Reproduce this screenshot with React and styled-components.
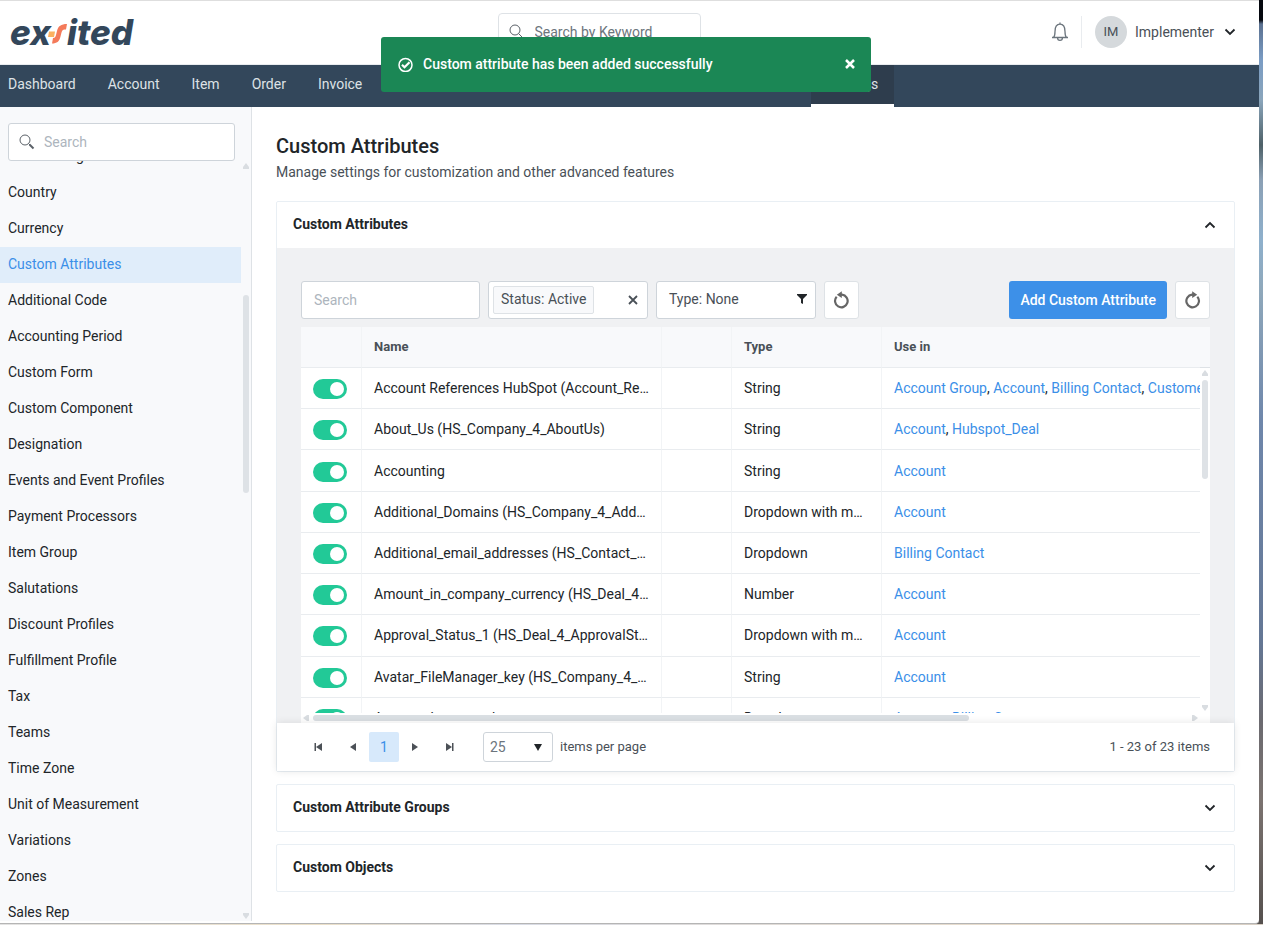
import React, { useState } from 'react';
import styled, { createGlobalStyle } from 'styled-components';

const navItems = ['Dashboard', 'Account', 'Item', 'Order', 'Invoice', 'Payment', 'Purchase Order', 'Adjustments', 'Integrations', 'Settings'];

const sideItems = [
  'User Settings',
  'Country',
  'Currency',
  'Custom Attributes',
  'Additional Code',
  'Accounting Period',
  'Custom Form',
  'Custom Component',
  'Designation',
  'Events and Event Profiles',
  'Payment Processors',
  'Item Group',
  'Salutations',
  'Discount Profiles',
  'Fulfillment Profile',
  'Tax',
  'Teams',
  'Time Zone',
  'Unit of Measurement',
  'Variations',
  'Zones',
  'Sales Rep',
];

const attributes = [
  { id: 1, name: 'Account References HubSpot (Account_References)', type: 'String', uses: ['Account Group', 'Account', 'Billing Contact', 'Customer'] },
  { id: 2, name: 'About_Us (HS_Company_4_AboutUs)', type: 'String', uses: ['Account', 'Hubspot_Deal'] },
  { id: 3, name: 'Accounting', type: 'String', uses: ['Account'] },
  { id: 4, name: 'Additional_Domains (HS_Company_4_AdditionalDomains)', type: 'Dropdown with multiple', uses: ['Account'] },
  { id: 5, name: 'Additional_email_addresses (HS_Contact_4_Emails)', type: 'Dropdown', uses: ['Billing Contact'] },
  { id: 6, name: 'Amount_in_company_currency (HS_Deal_4_Amount)', type: 'Number', uses: ['Account'] },
  { id: 7, name: 'Approval_Status_1 (HS_Deal_4_ApprovalStatus)', type: 'Dropdown with multiple', uses: ['Account'] },
  { id: 8, name: 'Avatar_FileManager_key (HS_Company_4_AvatarKey)', type: 'String', uses: ['Account'] },
  { id: 9, name: 'Average_hours_rank', type: 'Dropdown', uses: ['Account', 'Billing Contact'] },
];

const Logo = () => (
  <LogoLink href="#home" aria-label="exsited">
    <span>ex</span>
    <svg width="19" height="20" viewBox="0 0 19 20" aria-hidden="true">
      <path d="M1 7.500h6L6 13H0z" fill="#fbb161" />
      <path d="M19 0l-1 5.500h-1.500c-1.500 0-2.500 1-3 3l-1 4C11.300 17.500 9 19.500 4 19.500l1-5.500c2 0 2.500-1 3-3l1-4C10.200 2 13 0 19 0z" fill="#f47a5a" />
    </svg>
    <span>ited</span>
  </LogoLink>
);

const SearchIcon = ({ handle = 2 }) => (
  <svg width="16" height="16" viewBox="0 0 16 16" fill="none" stroke="#5b6168" aria-hidden="true">
    <circle cx="6" cy="6" r="5" />
    <path d="M9.500 9.500l1.500 1.500" />
    <path d="M10.500 10.500l4 4" strokeWidth={handle} />
  </svg>
);

const Chevron = ({ up }) => (
  <svg width="12" height="8" viewBox="0 0 12 8" fill="none" stroke="#212529" strokeWidth="1.800" aria-hidden="true">
    <path d={up ? 'M1.500 6.500L6 2l4.500 4.500' : 'M1.500 1.500L6 6l4.500-4.500'} />
  </svg>
);

const Reload = ({ back }) => (
  <svg width="18" height="18" viewBox="0 0 18 18" fill="none" aria-hidden="true">
    <g transform={back ? undefined : 'matrix(-1 0 0 1 17 0)'}>
      <path d="M3.700 5.700A6.300 6.300 0 1 0 9 3.700H7.500" stroke="#666" strokeWidth="2.200" />
      <path d="M8.800 .3v6.800L3.800 3.700z" fill="#666" />
    </g>
  </svg>
);

const Arrow = ({ dir }) => {
  const shapes = {
    up: 'M3 0l3 4v2H0V4z',
    down: 'M0 0h6v2L3 6 0 2z',
    left: 'M6 0v6H4L0 3l4-3z',
    right: 'M0 0v6h2l4-3-4-3z',
  };
  return (
    <svg width="6" height="6" viewBox="0 0 6 6" aria-hidden="true">
      <path d={shapes[dir]} fill="#d9dde1" />
    </svg>
  );
};

const PageArrow = ({ next, end }) => (
  <svg width="10" height="8" viewBox="0 0 10 8" fill="#4c5157" aria-hidden="true">
    <g transform={next ? 'matrix(-1 0 0 1 9 0)' : 'matrix(1 0 0 1 1 0)'}>
      <path d="M8 0v8L2 4z" />
      {end && <path d="M.5 0H2v8H.5z" />}
    </g>
  </svg>
);

const App = () => {
  const [toast, setToast] = useState(true);
  const [enabled, setEnabled] = useState(() => attributes.map(() => true));

  const toggle = (index) => {
    setEnabled(enabled.map((on, i) => (i === index ? !on : on)));
  };

  return (
    <Desktop>
      <GlobalStyle />
      <Window>
        <TopBar>
          <Logo />
          <KeywordSearch>
            <SearchIcon handle={1} />
            <input type="search" aria-label="Search by Keyword" placeholder="Search by Keyword" />
          </KeywordSearch>
          <UserArea>
            <BellButton aria-label="Notifications">
              <svg width="18" height="20" viewBox="0 0 18 20" fill="none" stroke="#6c757d" strokeWidth="1.300">
                <path d="M1 15.500h16M2.500 15.500C4 14 4 12.500 4 9.500 4 5 5.800 2.200 9 2.200s5 2.800 5 7.300c0 3 0 4.500 1.500 6M9 .5v2M6.500 15.500c0 3.800 5 3.800 5 0" />
              </svg>
            </BellButton>
            <UserButton>
              <Avatar>IM</Avatar>
              Implementer
              <Chevron />
            </UserButton>
          </UserArea>
        </TopBar>
        <Nav>
          {navItems.map((item) => (
            <NavLink key={item} href="#nav" $active={item === 'Settings'}>{item}</NavLink>
          ))}
        </Nav>
        <Body>
          <Sidebar>
            <SideSearch>
              <SearchIcon />
              <input type="search" aria-label="Search settings" placeholder="Search" />
            </SideSearch>
            <SideScroll>
              <SideList>
                {sideItems.map((item) => (
                  <li key={item}>
                    <SideLink href="#setting" $active={item === 'Custom Attributes'}>{item}</SideLink>
                  </li>
                ))}
              </SideList>
              <ScrollTrack>
                <Arrow dir="up" />
                <SideThumb />
                <Arrow dir="down" />
              </ScrollTrack>
            </SideScroll>
          </Sidebar>
          <Main>
            <h1>Custom Attributes</h1>
            <p>Manage settings for customization and other advanced features</p>
            <Panel>
              <PanelHead>
                Custom Attributes
                <Chevron up />
              </PanelHead>
              <PanelBody>
                <Toolbar>
                  <FilterInput type="search" aria-label="Search attributes" placeholder="Search" />
                  <Filter>
                    <Chip>Status: Active</Chip>
                    <ClearButton aria-label="Clear status">
                      <svg width="10" height="10" viewBox="0 0 10 10" stroke="#495057" strokeWidth="1.800">
                        <path d="M1 1l8 8M9 1L1 9" />
                      </svg>
                    </ClearButton>
                  </Filter>
                  <FilterButton>
                    Type: None
                    <svg width="10" height="10" viewBox="0 0 10 10" fill="#212529" aria-hidden="true">
                      <path d="M0 0h10v1L6 5v5L4 9V5L0 1z" />
                    </svg>
                  </FilterButton>
                  <IconButton aria-label="Reset filters"><Reload back /></IconButton>
                  <Spacer />
                  <PrimaryButton>Add Custom Attribute</PrimaryButton>
                  <IconButton aria-label="Refresh"><Reload /></IconButton>
                </Toolbar>
                <Grid>
                  <GridView>
                    <Table>
                      <colgroup>
                        <col width="60" />
                        <col width="300" />
                        <col width="70" />
                        <col width="150" />
                        <col />
                      </colgroup>
                      <thead>
                        <tr>
                          <th aria-label="Enabled" />
                          <th>Name</th>
                          <th aria-label="Flags" />
                          <th>Type</th>
                          <th>Use in</th>
                        </tr>
                      </thead>
                      <tbody>
                        {attributes.map(({ id, name, type, uses }, index) => (
                          <tr key={id}>
                            <td>
                              <Switch type="checkbox" aria-label={name} checked={enabled[index]} onChange={() => toggle(index)} />
                            </td>
                            <td>{name}</td>
                            <td />
                            <td>{type}</td>
                            <td>
                              {uses.map((use, i) => (
                                <React.Fragment key={use}>
                                  {i > 0 && ', '}
                                  <a href="#use">{use}</a>
                                </React.Fragment>
                              ))}
                            </td>
                          </tr>
                        ))}
                      </tbody>
                    </Table>
                  </GridView>
                  <GridSide>
                    <GridSideHead />
                    <ScrollTrack>
                      <Arrow dir="up" />
                      <GridThumb />
                      <Arrow dir="down" />
                    </ScrollTrack>
                  </GridSide>
                </Grid>
                <BottomBar>
                  <Arrow dir="left" />
                  <BottomTrack><BottomThumb /></BottomTrack>
                  <Arrow dir="right" />
                </BottomBar>
              </PanelBody>
              <Pager>
                <PageButton aria-label="First page"><PageArrow end /></PageButton>
                <PageButton aria-label="Previous page"><PageArrow /></PageButton>
                <PageButton $current>1</PageButton>
                <PageButton aria-label="Next page"><PageArrow next /></PageButton>
                <PageButton aria-label="Last page"><PageArrow next end /></PageButton>
                <PageSize>
                  <SelectBox>
                    <select defaultValue="25">
                      <option>10</option>
                      <option>25</option>
                      <option>50</option>
                    </select>
                    <svg width="8" height="7" viewBox="0 0 8 7" fill="#212529" aria-hidden="true">
                      <path d="M0 0h8L4 7z" />
                    </svg>
                  </SelectBox>
                  items per page
                </PageSize>
                <Spacer />
                <span>1 - 23 of 23 items</span>
              </Pager>
            </Panel>
            <Panel>
              <PanelHead>
                Custom Attribute Groups
                <Chevron />
              </PanelHead>
            </Panel>
            <Panel>
              <PanelHead>
                Custom Objects
                <Chevron />
              </PanelHead>
            </Panel>
          </Main>
        </Body>
      </Window>
      {toast && (
        <Toast role="status">
          <svg width="16" height="16" viewBox="0 0 16 16" fill="none" stroke="#fff" aria-hidden="true">
            <circle cx="8.500" cy="9" r="6.500" strokeWidth="1.500" />
            <path d="M5 8.700l2.500 2.500 5-5" strokeWidth="2.200" />
          </svg>
          Custom attribute has been added successfully
          <ToastClose aria-label="Close" onClick={() => setToast(false)}>
            <svg width="10" height="10" viewBox="0 0 10 10" stroke="#fff" strokeWidth="2.500">
              <path d="M1 1l8 8M9 1L1 9" />
            </svg>
          </ToastClose>
        </Toast>
      )}
    </Desktop>
  );
};

const GlobalStyle = createGlobalStyle`
* {
  box-sizing: border-box;
}
body {
  margin: 0;
  color: #212529;
  font: 14px/20px Roboto, "Liberation Sans", sans-serif;
}
button, input, select {
  margin: 0;
  padding: 0;
  border: 0;
  background: none;
  color: inherit;
  font: inherit;
  outline: none;
}
button {
  cursor: pointer;
}
a {
  color: #3b8fe8;
  text-decoration: none;
}
svg {
  display: block;
  flex: none;
}
`;

const Desktop = styled.div`
  position: relative;
  height: 100vh;
  padding: 0 4px 1px 0;
  background:
    linear-gradient(90deg, #e3e3e3, #ece0c8 25%, #d9dce6 40%, #e8dccb 80%, #d8cfc4) bottom / 100% 1px no-repeat,
    linear-gradient(#05080f 0, #05080f 20px, #5b7190 24px, #7a9cc4 60px, #8aa5bb 100px, #4e6168 145px, #8ba0b5 180px, #8eb0cc 240px, #8fa8bb 290px, #6f87ab 420px, #647795 640px, #6b6a70 720px, #7b7370 800px, #55504e 100%);
`;

const Window = styled.div`
  display: flex;
  flex-direction: column;
  height: 100%;
  overflow: hidden;
  background: #fff;
  border-top: 1px solid #dedede;
  border-bottom: 1px solid #b5b5b5;
  border-bottom-right-radius: 4px;
`;

const TopBar = styled.header`
  display: flex;
  flex: none;
  align-items: center;
  justify-content: space-between;
  height: 64px;
  padding: 0 23px 1px 10px;
  border-bottom: 1px solid #e9ecef;
`;

const LogoLink = styled.a`
  display: flex;
  align-items: center;
  width: 137px;
  color: #33475b;
  font: italic 800 35px/40px Inter, sans-serif;
  svg {
    margin: 4px 0 0 -3px;
  }
`;

const KeywordSearch = styled.div`
  display: flex;
  align-items: center;
  gap: 10px;
  width: 203px;
  height: 38px;
  padding: 0 10px;
  border: 1px solid #dee2e6;
  border-radius: 4px;
  input {
    min-width: 0;
    flex: 1;
  }
  input::placeholder {
    color: #6c757d;
  }
`;

const UserArea = styled.div`
  display: flex;
  align-items: center;
`;

const BellButton = styled.button`
  padding-right: 12px;
`;

const UserButton = styled.button`
  display: flex;
  align-items: center;
  gap: 8px;
  padding-left: 13px;
  border-left: 1px solid #e9ecef;
  color: #495057;
  svg {
    margin-left: 2px;
  }
`;

const Avatar = styled.span`
  width: 32px;
  border-radius: 50%;
  background: #d5d9dc;
  font-size: 13px;
  line-height: 32px;
  text-align: center;
`;

const Nav = styled.nav`
  display: flex;
  flex: none;
  height: 42px;
  margin-left: -8px;
  background: #33475b;
`;

const NavLink = styled.a`
  height: 42px;
  padding: 9px 16px;
  background: ${({ $active }) => ($active ? '#2e3d4d' : 'none')};
  border-bottom: 3px solid ${({ $active }) => ($active ? '#fff' : 'transparent')};
  color: #dee2e6;
  white-space: nowrap;
`;

const Body = styled.div`
  display: flex;
  flex: 1;
  min-height: 0;
  padding-bottom: 2px;
`;

const Sidebar = styled.aside`
  display: flex;
  flex-direction: column;
  flex: none;
  width: 252px;
  padding-top: 16px;
  background: #f8f9fb;
  border-right: 1px solid #dee2e6;
`;

const SideSearch = styled.div`
  display: flex;
  flex: none;
  align-items: center;
  gap: 9px;
  height: 38px;
  margin: 0 16px 0 8px;
  padding: 0 10px;
  background: #fff;
  border: 1px solid #ced4da;
  border-radius: 3px;
  input {
    min-width: 0;
    flex: 1;
  }
  input::placeholder {
    color: #adb5bd;
  }
`;

const SideScroll = styled.div`
  display: flex;
  flex: 1;
  min-height: 0;
  overflow: hidden;
`;

const SideList = styled.ul`
  flex: 1;
  height: 0;
  margin: -22px 0 0;
  padding: 0;
  list-style: none;
`;

const SideLink = styled.a`
  display: block;
  padding: 7px 8px 9px;
  background: ${({ $active }) => ($active ? '#e0edfa' : 'none')};
  color: ${({ $active }) => ($active ? '#3b8fe8' : '#212529')};
`;

const ScrollTrack = styled.div`
  display: flex;
  flex: 1;
  flex-direction: column;
  align-items: center;
  max-width: 10px;
  padding: 2px 0;
  > :last-child {
    margin-top: auto;
  }
`;

const SideThumb = styled.div`
  width: 6px;
  height: 198px;
  margin-top: 126px;
  border-radius: 3px;
  background: #dee2e6;
`;

const Main = styled.main`
  flex: 1;
  min-width: 0;
  padding: 27px 24px 0;
  h1 {
    margin: 0;
    font-size: 20px;
    font-weight: 500;
    line-height: 24px;
  }
  p {
    margin: 4px 0 19px;
    color: #495057;
  }
`;

const Panel = styled.section`
  margin-bottom: 12px;
  border: 1px solid #e9eff4;
  border-radius: 2px;
`;

const PanelHead = styled.button`
  display: flex;
  align-items: center;
  justify-content: space-between;
  width: 100%;
  height: 46px;
  padding: 0 18px 2px 16px;
  font-weight: 700;
  svg {
    margin-top: 2px;
  }
`;

const PanelBody = styled.div`
  padding: 33px 24px 0;
  background: #f0f1f3;
`;

const Toolbar = styled.div`
  display: flex;
  gap: 8px;
  margin-bottom: 8px;
`;

const FilterInput = styled.input`
  width: 179px;
  height: 38px;
  padding: 0 12px;
  background: #fff;
  border: 1px solid #ced4da;
  border-radius: 3px;
  &::placeholder {
    color: #adb5bd;
  }
`;

const Filter = styled.div`
  display: flex;
  align-items: center;
  justify-content: space-between;
  width: 160px;
  height: 38px;
  padding: 0 9px 0 4px;
  background: #fff;
  border: 1px solid #ced4da;
  border-radius: 3px;
  color: #495057;
`;

const Chip = styled.span`
  padding: 2px 7px 4px;
  background: #f8f9fb;
  border: 1px solid #dee2e6;
  border-radius: 2px;
`;

const ClearButton = styled.button`
  display: flex;
`;

const FilterButton = styled(Filter).attrs({ as: 'button' })`
  padding: 0 8px 2px 12px;
`;

const IconButton = styled.button`
  display: flex;
  align-items: center;
  justify-content: center;
  width: 35px;
  height: 38px;
  background: #fff;
  border: 1px solid #dee2e6;
  border-radius: 3px;
`;

const Spacer = styled.div`
  flex: 1;
`;

const PrimaryButton = styled.button`
  height: 38px;
  padding: 0 11px;
  border-radius: 3px;
  background: #3d90e8;
  color: #fff;
  font-weight: 500;
`;

const Grid = styled.div`
  display: flex;
  height: 386px;
  background: #fff;
`;

const GridView = styled.div`
  flex: 1;
  min-width: 0;
  overflow: hidden;
`;

const Table = styled.table`
  width: 1200px;
  height: 412px;
  table-layout: fixed;
  border-collapse: separate;
  border-spacing: 0;
  th, td {
    padding: 0 12px;
    overflow: hidden;
    border-left: 1px solid #f2f4f6;
    border-bottom: 1px solid #e9ecef;
    text-align: left;
    text-overflow: ellipsis;
    white-space: nowrap;
  }
  th {
    height: 41px;
    background: #f8f9fb;
    color: #495057;
    font-size: 13px;
    font-weight: 700;
  }
  th:first-child, td:first-child {
    border-left: 0;
  }
`;

const Switch = styled.input`
  appearance: none;
  display: block;
  width: 34px;
  height: 20px;
  margin-top: 2px;
  padding: 3px;
  border-radius: 10px;
  background: ${({ checked }) => (checked ? '#22c997' : '#adb5bd')};
  &::before {
    content: '';
    display: block;
    width: 14px;
    height: 14px;
    margin-left: ${({ checked }) => (checked ? '14px' : '0')};
    border-radius: 50%;
    background: #fff;
  }
`;

const GridSide = styled.div`
  display: flex;
  flex-direction: column;
  width: 10px;
`;

const GridSideHead = styled.div`
  height: 41px;
  background: #f8f9fb;
  border-bottom: 1px solid #dee2e6;
`;

const GridThumb = styled.div`
  width: 6px;
  height: 99px;
  margin-top: 4px;
  border-radius: 3px;
  background: #dee2e6;
`;

const BottomBar = styled.div`
  display: flex;
  align-items: center;
  gap: 4px;
  height: 10px;
  padding: 0 12px 0 2px;
  background: #fff;
`;

const BottomTrack = styled.div`
  flex: 1;
`;

const BottomThumb = styled.div`
  width: 75%;
  height: 6px;
  border-radius: 3px;
  background: #dadfe3;
`;

const Pager = styled.footer`
  display: flex;
  position: relative;
  align-items: center;
  height: 48px;
  padding: 0 24px;
  background: #fff;
  box-shadow: 0 0 8px rgba(0, 0, 0, .1);
  color: #495057;
  font-size: 13px;
`;

const PageButton = styled.button`
  display: flex;
  align-items: center;
  justify-content: center;
  width: ${({ $current }) => ($current ? '30px' : '34px')};
  height: 30px;
  border-radius: 2px;
  background: ${({ $current }) => ($current ? '#d7e9fb' : 'none')};
  color: #3b8fe8;
  font-size: 14px;
`;

const PageSize = styled.label`
  display: flex;
  align-items: center;
  gap: 7px;
  margin-left: 16px;
`;

const SelectBox = styled.span`
  display: grid;
  align-items: center;
  width: 70px;
  height: 30px;
  border: 1px solid #ced4da;
  border-radius: 3px;
  select {
    grid-area: 1 / 1;
    height: 28px;
    padding: 0 6px;
    appearance: none;
    color: #6c757d;
    font-size: 14px;
  }
  svg {
    grid-area: 1 / 1;
    justify-self: end;
    margin-right: 10px;
    pointer-events: none;
  }
`;

const Toast = styled.div`
  position: absolute;
  top: 37px;
  right: 392px;
  left: 381px;
  display: flex;
  align-items: center;
  gap: 10px;
  height: 55px;
  padding: 0 16px 1px;
  border-radius: 3px;
  background: #1b8755;
  color: #fff;
  font-weight: 500;
`;

const ToastClose = styled.button`
  display: flex;
  margin-left: auto;
`;

export default App;
